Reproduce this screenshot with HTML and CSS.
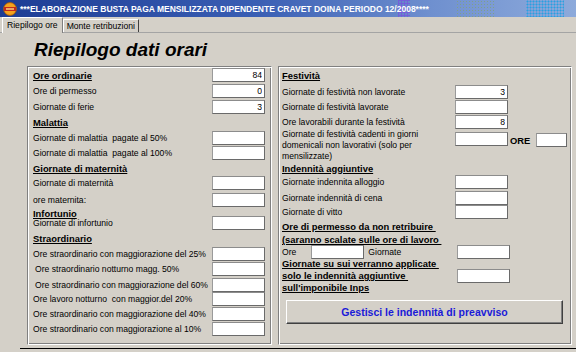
FILE: index.html
```html
<!DOCTYPE html>
<html lang="it">
<head>
    <meta charset="UTF-8">
    <title>Elaborazione busta paga</title>
    <link rel="stylesheet" href="styles.css">
</head>
<body>
    <div class="window">
        <div class="titlebar">
            <svg class="app-icon" width="14" height="14" viewBox="0 0 14 14">
                <circle cx="7" cy="7" r="6.4" fill="#f4a21e" stroke="#a85800" stroke-width="0.8"/>
                <rect x="1" y="5" width="12" height="4" fill="#c42a1c"/>
                <rect x="3" y="6.3" width="8" height="1.4" fill="#ffd987"/>
            </svg>
            <span class="title-text">***ELABORAZIONE BUSTA PAGA MENSILIZZATA DIPENDENTE CRAVET DOINA PERIODO 12/2008****</span>
            <span class="dots dots-a"></span>
            <span class="dots dots-b"></span>
            <span class="dots dots-c"></span>
        </div>
        <div class="tabs">
            <div class="tab active">Riepilogo ore</div>
            <div class="tab">Monte retribuzioni</div>
        </div>
        <div class="page">
            <h1>Riepilogo dati orari</h1>
            <div class="panels">
                <div class="panel left-panel">
                    <div class="head">Ore ordinarie</div><input class="box" type="text" value="84">
                    <div class="lbl">Ore di permesso</div><input class="box" type="text" value="0">
                    <div class="lbl">Giornate di ferie</div><input class="box" type="text" value="3">
                    <div class="head wide">Malattia</div>
                    <div class="lbl">Giornate di malattia&nbsp; pagate al 50%</div><input class="box" type="text">
                    <div class="lbl">Giornate di malattia&nbsp; pagate al 100%</div><input class="box" type="text">
                    <div class="head wide">Giornate di maternità</div>
                    <div class="lbl">Giornate di maternità</div><input class="box" type="text">
                    <div class="lbl">ore maternita:</div><input class="box" type="text">
                    <div class="head wide">Infortunio</div>
                    <div class="lbl">Giornate di infortunio</div><input class="box" type="text">
                    <div class="head wide">Straordinario</div>
                    <div class="lbl">Ore straordinario con maggiorazione del 25%</div><input class="box" type="text">
                    <div class="lbl indent">Ore straordinario notturno magg. 50%</div><input class="box" type="text">
                    <div class="lbl indent">Ore straordinario con maggiorazione del 60%</div><input class="box" type="text">
                    <div class="lbl">Ore lavoro notturno&nbsp; con maggior.del 20%</div><input class="box" type="text">
                    <div class="lbl">Ore straordinario con maggiorazione del 40%</div><input class="box" type="text">
                    <div class="lbl">Ore straordinario con maggiorazione al 10%</div><input class="box" type="text">
                </div>
                <div class="panel right-panel">
                    <div class="head wide">Festività</div>
                    <div class="lbl">Giornate di festività non lavorate</div><input class="box" type="text" value="3">
                    <div class="lbl">Giornate di festività lavorate</div><input class="box" type="text">
                    <div class="lbl">Ore lavorabili durante la festività</div><input class="box" type="text" value="8">
                    <div class="lbl multi">Giornate di festività cadenti in giorni domenicali non lavorativi (solo per mensilizzate)</div>
                    <input class="box top" type="text">
                    <div class="ore-extra"><span class="ore-lbl">ORE</span><input class="box small" type="text"></div>
                    <div class="head wide">Indennità aggiuntive</div>
                    <div class="lbl">Giornate indennita alloggio</div><input class="box" type="text">
                    <div class="lbl">Giornate indennità di cena</div><input class="box" type="text">
                    <div class="lbl">Giornate di vitto</div><input class="box" type="text">
                    <div class="head wide">Ore di permesso da non retribuire&nbsp;</div>
                    <div class="head wide">(saranno scalate sulle ore di lavoro&nbsp;</div>
                    <div class="lbl split"><span>Ore</span><input class="box ore-box" type="text"><span class="giornate">Giornate</span></div>
                    <input class="box shift" type="text">
                    <div class="head lines">Giornate su sui verranno applicate&nbsp;<br>solo le indennità aggiuntive&nbsp;<br>sull'imponibile Inps</div>
                    <input class="box shift" type="text">
                    <button class="action">Gestisci le indennità di preavviso</button>
                </div>
            </div>
            <div class="bottom-line"></div>
        </div>
    </div>
</body>
</html>
```

FILE: styles.css
```css
body { margin: 0; background: #d4d0c8; font-family: "Liberation Sans", Arial, sans-serif; color: #000; }
.window { width: 576px; height: 352px; overflow: hidden; background: #d4d0c8; }

/* title bar */
.titlebar { position: relative; height: 17px; display: flex; align-items: center; background: linear-gradient(90deg, #1d3c94 0%, #3a5fb4 45%, #6f90cf 75%, #8daadb 100%); }
.app-icon { margin-left: 3px; flex: none; }
.title-text { margin-left: 3px; color: #fff; font-size: 8.5px; font-weight: bold; white-space: nowrap; position: relative; z-index: 1; }
.dots { position: absolute; top: 0; height: 17px; background-size: 3px 3px; }
.dots-a { left: 398px; width: 12px; background-image: linear-gradient(#7a4fe0 1px, transparent 1px), linear-gradient(90deg, #7a4fe0 1px, transparent 1px); opacity: .7; }
.dots-b { left: 456px; width: 38px; background-image: radial-gradient(#7fa08a 0.8px, transparent 1px); }
.dots-c { left: 526px; width: 38px; background-image: radial-gradient(#29a0e0 0.9px, transparent 1.1px); }

/* tabs */
.tabs { display: flex; align-items: flex-end; height: 15px; padding-left: 2px; border-bottom: 1px solid #a4a4a4; }
.tab { height: 13px; padding: 0 3px; font-size: 8.6px; line-height: 13px; border-left: 1px solid #fff; border-top: 1px solid #fff; border-right: 1px solid #404040; box-sizing: border-box; }
.tab.active { height: 16px; margin-bottom: -1px; padding: 0 4px; line-height: 15px; background: #d4d0c8; border-right-color: #808080; }

/* page */
.page { padding-left: 20px; }
h1 { margin: 0; padding: 6px 0 5px 14px; font-size: 19px; line-height: 22px; font-weight: bold; font-style: italic; }
.panels { display: flex; gap: 6px; margin-left: 7px; height: 279px; }
.panel { box-sizing: border-box; height: 279px; border: 1px solid; border-color: #808080 #fff #fff #808080; box-shadow: inset 1px 1px 0 #fff, inset -1px -1px 0 #808080; display: grid; align-items: center; }
.left-panel { width: 245px; padding: 0 6px 0 5px; grid-template-columns: 1fr 53px; grid-template-rows: 16px 16px 15px 16px 15px 16px 14px 15px 19px 8px 12px 18px 13px 17px 15px 14px 15px 15px; align-content: start; }
.right-panel { width: 294px; padding: 0 0 0 3px; grid-template-columns: 173px 53px 1fr; grid-template-rows: 17px 15px 15px 15px 33px 12px 16px 15px 14px 14px 13px 12px 36px 30px; align-content: start; }

.lbl { grid-column: 1; font-size: 8.6px; line-height: 10px; white-space: nowrap; }
.lbl.indent { padding-left: 2px; }
.head { grid-column: 1; font-size: 9.4px; line-height: 11px; font-weight: bold; text-decoration: underline; white-space: nowrap; }
.head.wide { grid-column: 1 / -1; }
.lbl.multi { white-space: normal; line-height: 11px; align-self: start; width: 170px; }
.head.lines { line-height: 12px; }

.box { box-sizing: border-box; width: 53px; height: 14px; margin: 0; padding: 0 2px; background: #fff; border: 1px solid; border-color: #8c8c8c #6a6a6a #6a6a6a #9a9a9a; font-family: "Liberation Sans", Arial, sans-serif; font-size: 8.6px; text-align: right; color: #000; flex: none; }
.box.top { align-self: start; margin-top: 3px; }
.box.small { width: 31px; margin-left: 6px; }
.box.shift { margin-left: 2px; }
.ore-extra { display: flex; align-items: center; align-self: start; margin-top: 4px; padding-left: 2px; }
.ore-lbl { font-size: 9.4px; font-weight: bold; }
.split { display: flex; align-items: center; }
.box.ore-box { margin-left: 15px; }
.giornate { margin-left: 4px; }

.action { grid-column: 1 / -1; align-self: end; width: 277px; height: 24px; margin-left: 4px; padding: 0; background: #d4d0c8; border: 1px solid; border-color: #fff #404040 #404040 #fff; box-shadow: inset -1px -1px 0 #808080; font-family: "Liberation Sans", Arial, sans-serif; font-size: 10.5px; font-weight: bold; color: #1a1ad8; }

.bottom-line { height: 1px; margin-top: 3px; background: #000; }
```
